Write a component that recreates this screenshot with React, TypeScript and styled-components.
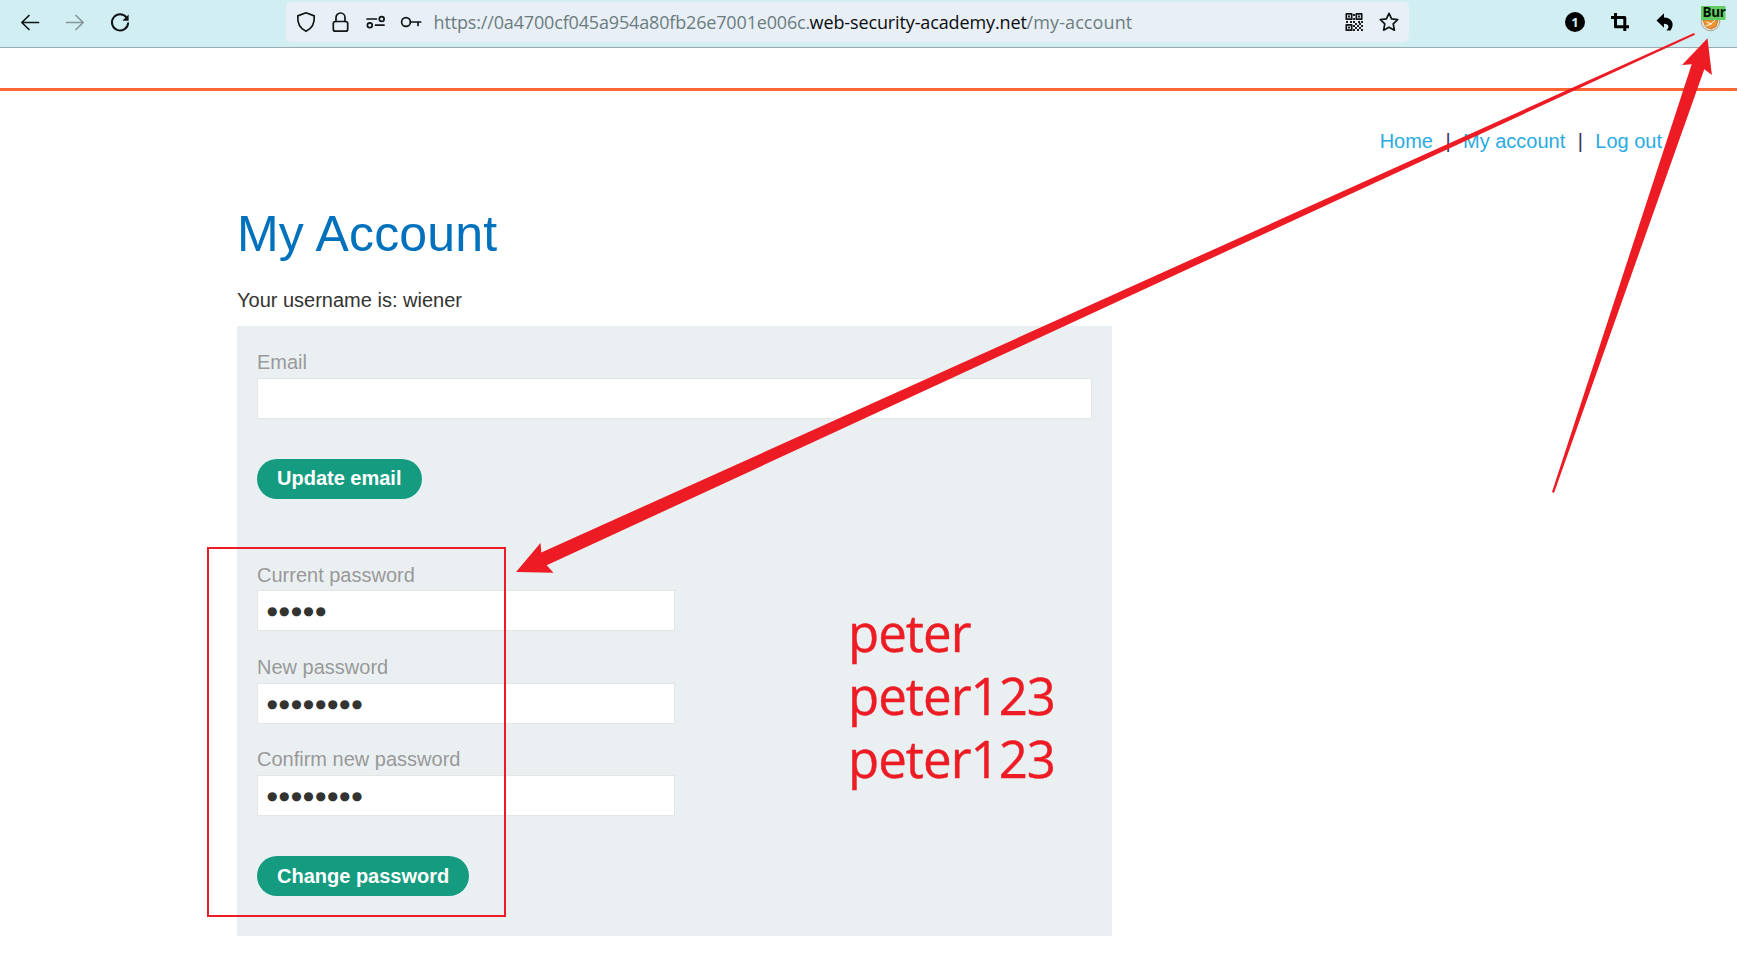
import React from 'react';
import styled, { createGlobalStyle } from 'styled-components';

const GlobalStyle = createGlobalStyle`
  * { box-sizing: border-box; }
  html, body { margin: 0; background: #fff; overflow: hidden; }
`;

const Page = styled.div`
  position: relative;
  width: 1737px;
  height: 955px;
  overflow: hidden;
  font-family: "Liberation Sans", Arial, sans-serif;
  font-size: 20px;
  color: #333332;
`;

const Toolbar = styled.header`
  display: flex;
  align-items: flex-start;
  height: 48px;
  padding: 2px 15px 0 18px;
  background: #d1eef2;
  border-bottom: 1px solid #98abb1;
`;

const IconGroup = styled.div<{ $gap: number }>`
  display: flex;
  align-items: center;
  height: 40px;
  gap: ${(p) => p.$gap}px;
`;

const Glyph = styled.svg<{ $dim?: boolean; $weight?: number }>`
  display: block;
  flex: none;
  width: 24px;
  height: 24px;
  overflow: visible;
  fill: none;
  stroke: #111516;
  stroke-width: ${(p) => p.$weight ?? 1.7};
  stroke-linecap: round;
  stroke-linejoin: round;
  opacity: ${(p) => (p.$dim ? 0.4 : 1)};
`;

const AddressBar = styled.div`
  display: flex;
  align-items: center;
  width: 1123px;
  height: 40px;
  margin: 0 154px;
  padding: 0 8px;
  border-radius: 5px;
  background: #e8eff6;
`;

const Url = styled.div`
  flex: 1;
  display: flex;
  padding-left: 10px;
  font-family: "Open Sans", "Noto Sans", sans-serif;
  font-size: 18px;
  line-height: 40px;
  white-space: pre;
`;

const UrlPart = styled.span<{ $strong?: boolean; $width: number; $track: number }>`
  width: ${(p) => p.$width}px;
  letter-spacing: ${(p) => p.$track}px;
  color: ${(p) => (p.$strong ? '#0b0c0d' : '#6b7d7f')};
`;

const Banner = styled.div`
  height: 43px;
  border-bottom: 3px solid #ff6633;
`;

const Nav = styled.nav`
  display: flex;
  justify-content: flex-end;
  padding: 34px 75px 0 0;
  line-height: 32px;
  white-space: pre;
`;

const NavLink = styled.a`
  color: #29abe2;
`;

const Divider = styled.span`
  width: 30px;
  text-align: center;
  color: #333366;
`;

const Content = styled.main`
  width: 875px;
  margin-left: 237px;
`;

const Title = styled.h1`
  margin: 0;
  padding-top: 45px;
  font-size: 50px;
  font-weight: 400;
  line-height: 64px;
  letter-spacing: 0.2px;
  color: #0071bc;
`;

const Username = styled.p`
  margin: 0;
  padding-top: 18px;
  height: 60px;
  line-height: 32px;
`;

const Panel = styled.section`
  height: 610px;
  padding: 20px;
  background: #eaf0f2;
`;

const Field = styled.div<{ $top?: number }>`
  margin-top: ${(p) => p.$top ?? 0}px;
`;

const Label = styled.label<{ $height?: number }>`
  display: block;
  height: ${(p) => p.$height ?? 32}px;
  line-height: 32px;
  color: #999;
`;

const InputBox = styled.div<{ $width: number }>`
  display: flex;
  align-items: center;
  width: ${(p) => p.$width}px;
  height: 41px;
  padding: 0 8px 0 9px;
  border: 1px solid #e4e6e6;
  background: #fff;
  font-family: "DejaVu Sans", sans-serif;
  font-size: 12px;
  letter-spacing: 1.63px;
`;

const PillButton = styled.button<{ $width: number; $lift: number }>`
  display: block;
  width: ${(p) => p.$width}px;
  height: 40px;
  margin: 40px 0 0;
  padding: 0 0 ${(p) => p.$lift}px 20px;
  border: 0;
  border-radius: 20px;
  background: #159c80;
  color: #fff;
  font: bold 20px/36px "Liberation Sans", Arial, sans-serif;
  text-align: left;
  white-space: nowrap;
`;

const Markup = styled.svg`
  position: absolute;
  left: 0;
  top: 0;
  pointer-events: none;
`;

const Highlight = styled.div`
  position: absolute;
  left: 207px;
  top: 547px;
  width: 299px;
  height: 370px;
  border: 2px solid #ed1c24;
`;

const Note = styled.div`
  position: absolute;
  left: 848px;
  top: 601px;
  color: #ed1c24;
  font-family: "Open Sans", "Noto Sans", sans-serif;
  font-size: 51px;
  line-height: 63px;
  letter-spacing: -1px;
  -webkit-text-stroke: 0.4px #ed1c24;
`;

const BadgeText = styled.text`
  fill: #061206;
  stroke: none;
  font: bold 13.5px "Open Sans", sans-serif;
  letter-spacing: -0.4px;
`;

const CountText = styled.text`
  fill: #d1eef2;
  stroke: none;
  font: bold 13px "Open Sans", sans-serif;
  text-anchor: middle;
`;

const finder = (x: number, y: number) => (
  <g key={`${x}-${y}`}>
    <rect x={x + 0.8} y={y + 0.8} width="5.4" height="5.4" />
    <rect x={x + 2.5} y={y + 2.5} width="2" height="2" fill="#222" stroke="none" />
  </g>
);

const qrDots = [
  [11, 4], [11, 8], [11, 11], [4, 11], [8, 11], [13, 13], [16, 11], [19, 11],
  [15, 15], [19, 15], [13, 17], [17, 17], [15, 19], [19, 19], [17, 13], [11, 15], [11, 19],
];

const fields = [
  { label: 'Current password', dots: 5, top: 60, height: 31 },
  { label: 'New password', dots: 8, top: 20, height: 32 },
  { label: 'Confirm new password', dots: 8, top: 19, height: 32 },
];

export default function App() {
  return (
    <Page>
      <GlobalStyle />
      <Toolbar>
        <IconGroup $gap={21}>
          <Glyph><path d="M20.5 12.5H4M11 5.5l-7.2 7 7.2 7" /></Glyph>
          <Glyph $dim><path d="M3.5 12.5H20M13 5.5l7.2 7-7.2 7" /></Glyph>
          <Glyph $weight={2}>
            <path d="M18.5 7.5A8.1 8.1 0 1 0 20.1 13.3" />
            <path d="M20.6 4.5v6.2h-6.2z" fill="#111516" stroke="none" />
          </Glyph>
        </IconGroup>
        <AddressBar>
          <IconGroup $gap={11.2}>
            <Glyph><path d="M12 2.8l8.2 3.1c.5 6.4-1.6 12.4-8.2 15.4C5.4 18.3 3.3 12.3 3.8 5.9z" /></Glyph>
            <Glyph>
              <rect x="4.3" y="11.5" width="14.4" height="9.7" rx="2" />
              <path d="M7 11.5V7.5a4.5 4.5 0 0 1 9 0v4" />
            </Glyph>
            <Glyph>
              <path d="M3 9h9.5M11.5 15.2H20" />
              <circle cx="17.7" cy="9" r="2.4" />
              <circle cx="5.8" cy="15.2" r="2.4" />
            </Glyph>
            <Glyph>
              <circle cx="6" cy="12" r="4.4" />
              <path d="M10.5 12h10.2M18 12v3.5" />
            </Glyph>
          </IconGroup>
          <Url>
            <UrlPart $width={376} $track={-0.16}>https://0a4700cf045a954a80fb26e7001e006c.</UrlPart>
            <UrlPart $strong $width={217} $track={-0.12}>web-security-academy.net</UrlPart>
            <UrlPart $width={124} $track={0.1}>/my-account</UrlPart>
          </Url>
          <IconGroup $gap={11}>
            <Glyph>
              {finder(3.5, 3)}
              {finder(13.5, 3)}
              {finder(3.5, 14)}
              {qrDots.map(([x, y]) => (
                <rect key={`${x}-${y}`} x={x} y={y} width="2" height="2" fill="#222" stroke="none" />
              ))}
            </Glyph>
            <Glyph>
              <path d="M12 3.3l2.6 5.6 6.1.8-4.5 4.2 1.2 6.3-5.4-3-5.4 3 1.2-6.3-4.5-4.2 6.1-.8z" />
            </Glyph>
          </IconGroup>
        </AddressBar>
        <IconGroup $gap={21}>
          <Glyph>
            <circle cx="12" cy="12" r="10" fill="#000" stroke="none" />
            <CountText x="12" y="16.6">1</CountText>
          </Glyph>
          <Glyph $weight={3}>
            <path d="M7.5 4.5v12.3h12M4.5 7.5h12.3v12" stroke="#000" strokeLinecap="square" />
          </Glyph>
          <Glyph>
            <path d="M11 3.3v4.3c7.2 0 11.5 6.2 6.5 12.8h-4c3.8-3.5 2-6.6-2.5-6.6v4L3.5 10.5z" fill="#000" stroke="none" />
          </Glyph>
          <Glyph $weight={1}>
            <circle cx="12.5" cy="11.5" r="9.3" fill="#f1dfc8" stroke="#aaa59d" />
            <path d="M5.5 10h14.5l-2 6.5-5 2.5-5-2z" fill="#f2922b" stroke="#bd7939" />
            <path d="M8 16l5-2 4-4M9 12l4 2" stroke="#fff" />
            <rect x="3" y="-4" width="24.5" height="14" fill="#61cd64" stroke="none" />
            <BadgeText x="4.5" y="7">Bur</BadgeText>
          </Glyph>
        </IconGroup>
      </Toolbar>
      <Banner />
      <Nav>
        <NavLink>Home</NavLink>
        <Divider>|</Divider>
        <NavLink>My account</NavLink>
        <Divider>|</Divider>
        <NavLink>Log out</NavLink>
      </Nav>
      <Content>
        <Title>My Account</Title>
        <Username>Your username is: wiener</Username>
        <Panel>
          <Field>
            <Label>Email</Label>
            <InputBox $width={835} />
          </Field>
          <PillButton $width={165} $lift={3}>Update email</PillButton>
          {fields.map((f) => (
            <Field key={f.label} $top={f.top}>
              <Label $height={f.height}>{f.label}</Label>
              <InputBox $width={418}>{'●'.repeat(f.dots)}</InputBox>
            </Field>
          ))}
          <PillButton $width={212} $lift={1}>Change password</PillButton>
        </Panel>
      </Content>
      <Note>
        <div>peter</div>
        <div>peter123</div>
        <div>peter123</div>
      </Note>
      <Highlight />
      <Markup width="1737" height="955" fill="#ed1c24">
        <polygon points="516,572 540.5,543 541.3,552.5 1694,33 1695,34.8 546.7,565.3 553.5,572.8" />
        <polygon points="1707.5,38.3 1682,65 1691.7,64.3 1552,492 1554,493 1704.3,69.3 1711.9,75" />
      </Markup>
    </Page>
  );
}
